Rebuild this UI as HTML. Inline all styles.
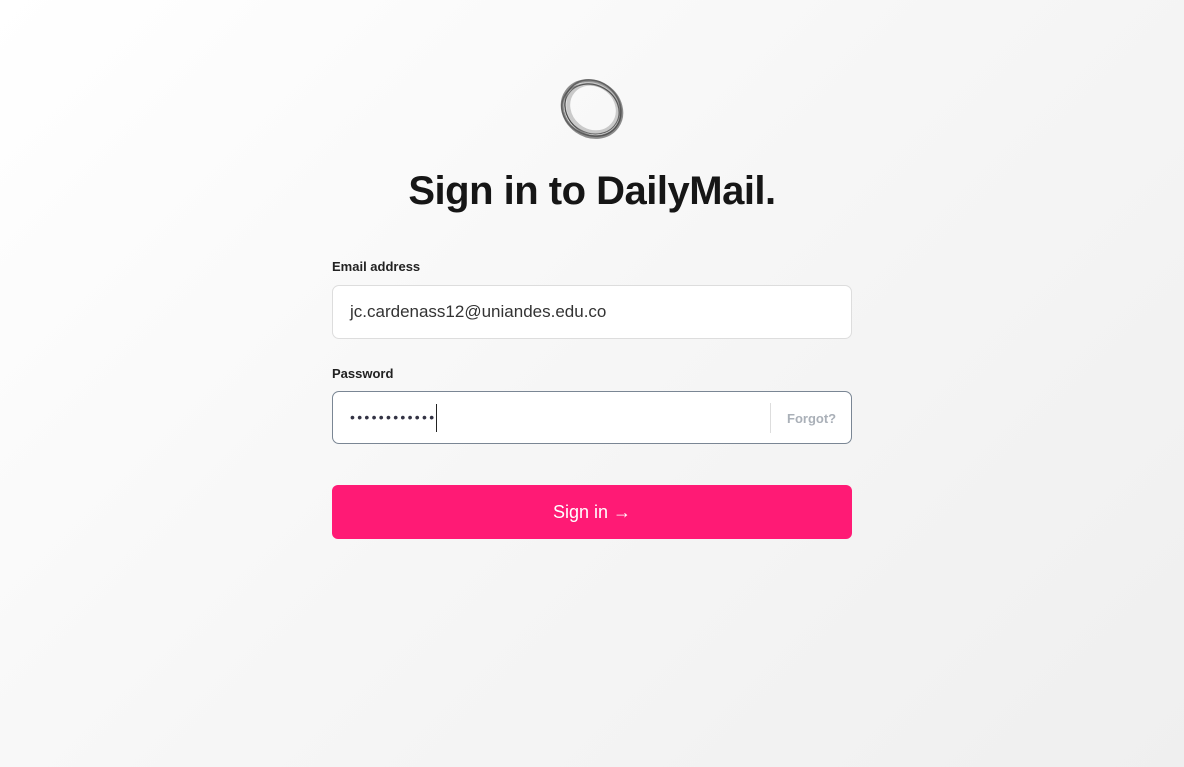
<!DOCTYPE html>
<html><head><meta charset="utf-8"><style>
html,body{margin:0;width:1184px;height:767px;overflow:hidden}
body{background:linear-gradient(135deg,#ffffff 0%,#f6f6f6 50%,#efefef 100%);font-family:"Liberation Sans",sans-serif;position:relative}
h1{position:absolute;top:169px;left:0;width:1184px;text-align:center;margin:0;font-size:40px;font-weight:bold;color:#161616;letter-spacing:-0.5px}
.lbl{position:absolute;left:332px;font-size:13px;font-weight:bold;color:#222}
.inp{position:absolute;left:332px;width:518px;height:51px;background:#fff;border:1px solid #ddd;border-radius:7px;box-sizing:content-box}
.inp span{position:absolute;left:17px;top:16px;font-size:17px;color:#333}
.btn{position:absolute;left:332px;top:485px;width:520px;height:54px;background:#ff1a75;border-radius:6px;color:#fff;font-size:18px;text-align:center;line-height:54px}
</style></head><body>
<svg style="position:absolute;left:556px;top:76px" width="72" height="68" viewBox="0 0 72 68">
<g fill="none" stroke="#444" stroke-opacity=".6">
<ellipse cx="36" cy="33" rx="31" ry="27" transform="rotate(35 36 33)" stroke-width="3"/>
<ellipse cx="37" cy="32" rx="30" ry="26" transform="rotate(45 37 32)" stroke-width="1.5"/>
<ellipse cx="35" cy="34" rx="30" ry="25" transform="rotate(25 35 34)" stroke-width="1.5"/>
<ellipse cx="37" cy="32" rx="26" ry="23" transform="rotate(40 37 32)" stroke-width="4" stroke="#aaa"/>
<ellipse cx="36" cy="33" rx="28" ry="24" transform="rotate(30 36 33)" stroke-width="1.2" stroke="#222"/>
</g></svg>
<h1>Sign in to DailyMail.</h1>
<div class="lbl" style="top:259px">Email address</div>
<div class="inp" style="top:285px;height:52px"><span>jc.cardenass12@uniandes.edu.co</span></div>
<div class="lbl" style="top:366px">Password</div>
<div class="inp" style="top:391px;height:51px;border-color:#7a8694">
<span style="top:17px;font-size:14px;letter-spacing:2.3px;color:#334">••••••••••••</span>
<div style="position:absolute;left:103px;top:12px;width:1px;height:28px;background:#222"></div>
<div style="position:absolute;left:437px;top:11px;width:1px;height:30px;background:#ddd"></div>
<div style="position:absolute;left:454px;top:19px;font-size:13px;font-weight:bold;color:#aab0b8">Forgot?</div>
</div>
<div class="btn">Sign in →</div>
</body></html>
